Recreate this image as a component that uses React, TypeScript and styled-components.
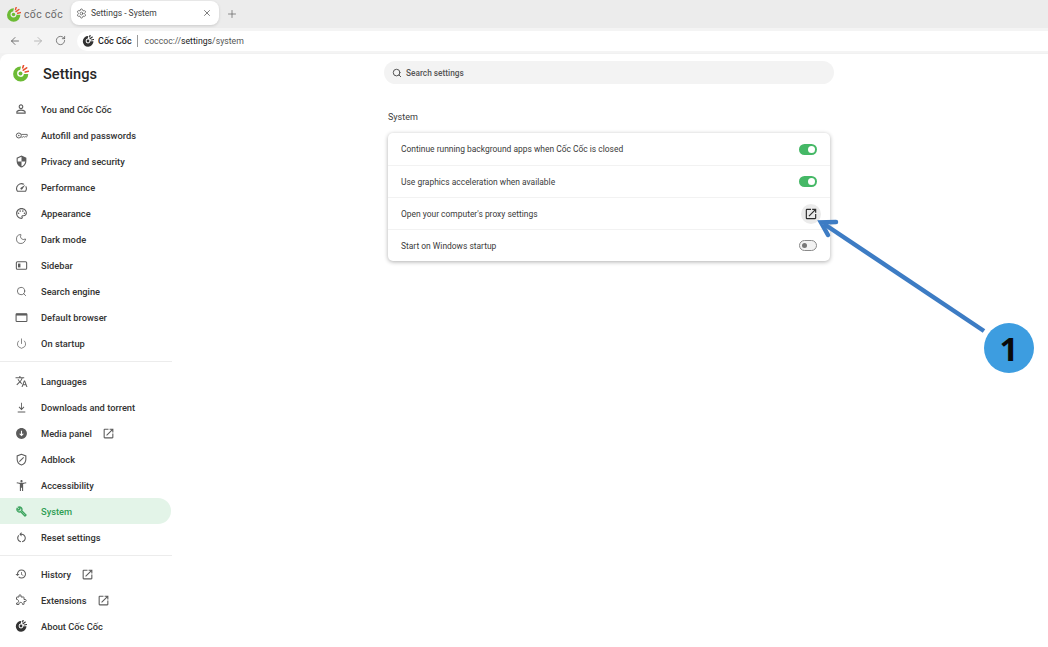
import React from "react";
import styled, { createGlobalStyle } from "styled-components";
import {
  ArrowLeft,
  ArrowRight,
  Moon,
  Plus,
  Power,
  RotateCw,
  Search,
  Settings,
  X,
} from "lucide-react";

const GlobalStyle = createGlobalStyle`
  html, body {
    margin: 0;
    padding: 0;
    background: #fff;
  }
  body {
    font-family: Roboto, "Noto Sans", sans-serif;
    color: #2b2b2b;
    overflow: hidden;
  }
`;

const Page = styled.div`
  position: relative;
  width: 1048px;
  height: 647px;
  display: flex;
  flex-direction: column;
  background: #f1f1f1;
  overflow: hidden;
`;

const TabStrip = styled.div`
  height: 28px;
  background: #ececec;
  display: flex;
  align-items: flex-end;
  padding-left: 6px;
`;

const Brand = styled.div`
  display: flex;
  align-items: center;
  gap: 3px;
  height: 28px;
  width: 65px;
  color: #666;
  font-size: 10.4px;
  letter-spacing: 0.4px;
`;

const Tab = styled.div`
  width: 148px;
  height: 24px;
  margin-bottom: 3px;
  background: #fff;
  border-radius: 8px;
  display: flex;
  align-items: center;
  padding: 0 7px 0 5px;
  box-sizing: border-box;
  gap: 4px;
  font-size: 8.5px;
  color: #3c3c3c;
  box-shadow: 0 1px 3px rgba(0, 0, 0, 0.14);
`;

const TabTitle = styled.span`
  flex: 1;
`;

const NewTab = styled.div`
  margin: 0 0 8px 7px;
  display: flex;
  color: #666;
`;

const Toolbar = styled.div`
  height: 25px;
  background: #f4f4f4;
  display: flex;
  align-items: center;
  padding-left: 9px;
  gap: 11px;
`;

const Omnibox = styled.div`
  flex: 1;
  height: 20px;
  background: #fff;
  border-radius: 10px 0 0 10px;
  display: flex;
  align-items: center;
  padding-left: 5px;
  font-size: 8.7px;
  color: #555;
`;

const SiteChip = styled.span`
  display: flex;
  align-items: center;
  gap: 4px;
  color: #222;
  font-size: 9px;
  font-weight: 500;
  padding-right: 5px;
  margin-right: 7px;
  border-right: 1px solid #9a9a9a;
  height: 12px;
`;

const UrlPath = styled.span`
  color: #222;
`;

const Content = styled.div`
  flex: 1;
  display: flex;
  min-height: 0;
  margin-top: 1px;
  background: #fff;
  border-radius: 8px 0 0 0;
`;

const Sidebar = styled.nav`
  width: 172px;
  flex: none;
  display: flex;
  flex-direction: column;
`;

const SideHeader = styled.div`
  height: 42px;
  box-sizing: border-box;
  padding: 0 0 3px 12px;
  display: flex;
  align-items: center;
  gap: 14px;
  font-size: 14.6px;
  font-weight: 500;
  color: #262626;
`;

const NavItem = styled.div<{ $active?: boolean }>`
  height: 26px;
  flex: none;
  display: flex;
  align-items: center;
  padding-left: 14px;
  gap: 13px;
  margin-right: 1px;
  border-radius: 0 13px 13px 0;
  font-size: 9.3px;
  font-weight: 500;
  color: ${(p) => (p.$active ? "#2f9e54" : "#333")};
  background: ${(p) => (p.$active ? "#e3f4e8" : "transparent")};
  svg {
    flex: none;
    color: ${(p) => (p.$active ? "#2f9e54" : "#5c5c5c")};
  }
`;

const IconSlot = styled.span`
  width: 14px;
  flex: none;
  display: flex;
  align-items: center;
  justify-content: center;
`;

const NavLabel = styled.span`
  display: flex;
  align-items: center;
  gap: 10px;
`;

const Divider = styled.div`
  height: 1px;
  flex: none;
  background: #ececec;
  margin: 5px 0;
`;

const WideDivider = styled(Divider)`
  margin-bottom: 6px;
`;

const Main = styled.main`
  flex: 1;
  display: flex;
  flex-direction: column;
  align-items: center;
  padding-top: 7px;
`;

const SearchBar = styled.div`
  width: 450px;
  height: 23px;
  margin-left: -2px;
  background: #f3f3f3;
  border-radius: 12px;
  display: flex;
  align-items: center;
  gap: 4px;
  padding-left: 8px;
  box-sizing: border-box;
  font-size: 8.3px;
  font-weight: 500;
  color: #555;
`;

const Section = styled.section`
  width: 442px;
  margin-left: -2px;
  margin-top: 26px;
`;

const SectionTitle = styled.h2`
  margin: 0 0 9px;
  font-size: 9px;
  font-weight: 400;
  line-height: 14px;
  color: #3c3c3c;
`;

const Card = styled.div`
  background: #fff;
  border-radius: 5px;
  box-shadow: 0 1px 4px rgba(0, 0, 0, 0.32);
`;

const Row = styled.div`
  height: 32px;
  box-sizing: border-box;
  display: flex;
  align-items: center;
  justify-content: space-between;
  padding: 0 13px;
  font-size: 8.45px;
  color: #3a3a3a;
  & + & {
    border-top: 1px solid #f2f2f2;
  }
`;

const Toggle = styled.span<{ $on?: boolean }>`
  width: 18px;
  height: 11px;
  box-sizing: border-box;
  border-radius: 6px;
  display: flex;
  align-items: center;
  padding: 0 2px;
  justify-content: ${(p) => (p.$on ? "flex-end" : "flex-start")};
  background: ${(p) => (p.$on ? "#45b866" : "#f2f2f2")};
  border: ${(p) => (p.$on ? "none" : "1px solid #8a8a8a")};
  &::after {
    content: "";
    width: ${(p) => (p.$on ? "7px" : "5px")};
    height: ${(p) => (p.$on ? "7px" : "5px")};
    border-radius: 50%;
    background: ${(p) => (p.$on ? "#fff" : "#777")};
  }
`;

const LinkButton = styled.span`
  width: 20px;
  height: 20px;
  margin-right: -4px;
  border-radius: 50%;
  background: #ebebeb;
  display: flex;
  align-items: center;
  justify-content: center;
  color: #2d2d2d;
`;

const Callout = styled.svg`
  position: absolute;
  left: 0;
  top: 0;
  pointer-events: none;
`;

const Badge = styled.div`
  position: absolute;
  left: 984px;
  top: 323px;
  width: 50px;
  height: 50px;
  border-radius: 50%;
  background: #3d9de0;
  color: #0a0a0a;
  display: flex;
  align-items: center;
  justify-content: center;
  font-family: "Open Sans", sans-serif;
  font-size: 33px;
  font-weight: 700;
`;

const CocCocMark = ({ size, dark }: { size: number; dark?: boolean }) => (
  <svg width={size} height={size} viewBox="1 2 18 18">
    <path
      d="M10.5 3.6A8 8 0 1 0 18.2 11.4h-4.6A3.6 3.6 0 1 1 9.6 7.4z"
      fill={dark ? "#333" : "#6cbb35"}
    />
    <circle cx="10" cy="11" r="2.1" fill={dark ? "#333" : "#6cbb35"} />
    <path
      d="M13 7.5l3.5-2.5M12.4 5l.8-2.6M15 9.5l3.4-.8"
      stroke={dark ? "#333" : "#e8502f"}
      strokeWidth="1.7"
      strokeLinecap="round"
    />
  </svg>
);

// material style glyphs, lucide ones are too thin for this sidebar
const Glyph = ({ size = 13, children }: { size?: number; children: React.ReactNode }) => (
  <svg width={size} height={size} viewBox="0 0 24 24" fill="currentColor">
    {children}
  </svg>
);

const OpenOut = ({ size = 13 }: { size?: number }) => (
  <Glyph size={size}>
    <path d="M19 19H5V5h7V3H5a2 2 0 0 0-2 2v14a2 2 0 0 0 2 2h14c1.1 0 2-.9 2-2v-7h-2v7zM14 3v2h3.59l-9.83 9.83 1.41 1.41L19 6.41V10h2V3h-7z" />
  </Glyph>
);

type NavEntry = {
  label: string;
  icon: React.ReactNode;
  external?: boolean;
  active?: boolean;
};

const navTop: NavEntry[] = [
  {
    label: "You and Cốc Cốc",
    icon: (
      <Glyph size={14}>
        <path d="M12 5.9c1.16 0 2.1.94 2.1 2.1s-.94 2.1-2.1 2.1S9.9 9.16 9.9 8s.94-2.1 2.1-2.1m0 9c2.97 0 6.1 1.46 6.1 2.1v1.1H5.9V17c0-.64 3.13-2.1 6.1-2.1M12 4C9.79 4 8 5.79 8 8s1.79 4 4 4 4-1.79 4-4-1.79-4-4-4zm0 9c-2.67 0-8 1.34-8 4v3h16v-3c0-2.66-5.33-4-8-4z" />
      </Glyph>
    ),
  },
  {
    label: "Autofill and passwords",
    icon: (
      <Glyph>
        <circle cx="7" cy="12" r="4.6" fill="none" stroke="currentColor" strokeWidth="1.8" />
        <circle cx="7" cy="12" r="1.4" />
        <path
          d="M11.6 10H22.5v3.4l-2 1.6-1.5-1.2-1.5 1.2-1.5-1.2-1.5 1.2h-2.8"
          fill="none"
          stroke="currentColor"
          strokeWidth="1.6"
        />
      </Glyph>
    ),
  },
  {
    label: "Privacy and security",
    icon: (
      <Glyph>
        <path d="M12 1L3 5v6c0 5.55 3.84 10.74 9 12 5.16-1.26 9-6.45 9-12V5l-9-4zm0 10.99h7c-.53 4.12-3.28 7.79-7 8.94V12H5V6.3l7-3.11v8.8z" />
      </Glyph>
    ),
  },
  {
    label: "Performance",
    icon: (
      <Glyph>
        <path d="M20.38 8.57l-1.23 1.85a8 8 0 0 1-.22 7.58H5.07A8 8 0 0 1 15.58 6.85l1.85-1.23A10 10 0 0 0 3.35 19a2 2 0 0 0 1.72 1h13.85a2 2 0 0 0 1.74-1 10 10 0 0 0-.27-10.44zm-9.79 6.84a2 2 0 0 0 2.83 0l5.66-8.49-8.49 5.66a2 2 0 0 0 0 2.83z" />
      </Glyph>
    ),
  },
  {
    label: "Appearance",
    icon: (
      <Glyph>
        <path d="M12 22C6.49 22 2 17.51 2 12S6.49 2 12 2s10 4.04 10 9c0 3.31-2.69 6-6 6h-1.77c-.28 0-.5.22-.5.5 0 .12.05.23.13.33.41.47.64 1.06.64 1.67 0 1.38-1.12 2.5-2.5 2.5zm0-18c-4.41 0-8 3.59-8 8s3.59 8 8 8c.28 0 .5-.22.5-.5 0-.16-.08-.28-.14-.35-.41-.46-.63-1.05-.63-1.65 0-1.38 1.12-2.5 2.5-2.5H16c2.21 0 4-1.79 4-4 0-3.86-3.59-7-8-7z" />
        <circle cx="6.5" cy="11.5" r="1.5" />
        <circle cx="9.5" cy="7.5" r="1.5" />
        <circle cx="14.5" cy="7.5" r="1.5" />
        <circle cx="17.5" cy="11.5" r="1.5" />
      </Glyph>
    ),
  },
  { label: "Dark mode", icon: <Moon size={12} strokeWidth={1.6} /> },
  {
    label: "Sidebar",
    icon: (
      <Glyph>
        <rect x="2.5" y="5" width="19" height="14" rx="2" fill="none" stroke="currentColor" strokeWidth="2" />
        <rect x="5.5" y="8.5" width="4.5" height="7" />
      </Glyph>
    ),
  },
  {
    label: "Search engine",
    icon: <Search size={11} strokeWidth={1.8} />,
  },
  {
    label: "Default browser",
    icon: (
      <Glyph>
        <rect x="2" y="5" width="20" height="14.5" rx="1.5" fill="none" stroke="currentColor" strokeWidth="2" />
        <rect x="2" y="5" width="20" height="3.4" />
      </Glyph>
    ),
  },
  { label: "On startup", icon: <Power size={11} strokeWidth={1.6} /> },
];

const navMiddle: NavEntry[] = [
  {
    label: "Languages",
    icon: (
      <Glyph>
        <path d="M12.87 15.07l-2.54-2.51.03-.03c1.74-1.94 2.98-4.17 3.71-6.53H17V4h-7V2H8v2H1v1.99h11.17C11.5 7.92 10.44 9.75 9 11.35 8.07 10.32 7.3 9.19 6.69 8h-2c.73 1.63 1.73 3.17 2.98 4.56l-5.09 5.02L4 19l5-5 3.11 3.11.76-2.04zM18.5 10h-2L12 22h2l1.12-3h4.75L21 22h2l-4.5-12zm-2.62 7l1.62-4.33L19.12 17h-3.24z" />
      </Glyph>
    ),
  },
  {
    label: "Downloads and torrent",
    icon: (
      <Glyph>
        <path d="M11.2 3h1.6v10.6l3.3-3.3 1.1 1.1L12 17l-5.2-5.6 1.1-1.1 3.3 3.3zM5 19.4h14V21H5z" />
      </Glyph>
    ),
  },
  {
    label: "Media panel",
    icon: (
      <Glyph>
        <path d="M12 2C6.48 2 2 6.48 2 12s4.48 10 10 10 10-4.48 10-10S17.52 2 12 2zm0 15l-4.5-4.5H11V7h2v5.5h3.5z" />
      </Glyph>
    ),
    external: true,
  },
  {
    label: "Adblock",
    icon: (
      <Glyph>
        <path
          d="M12 2.5L4 5.5v6c0 4.8 3.3 9 8 10.5 4.7-1.5 8-5.7 8-10.5v-6zM8 16l8-8"
          fill="none"
          stroke="currentColor"
          strokeWidth="2"
        />
      </Glyph>
    ),
  },
  {
    label: "Accessibility",
    icon: (
      <Glyph>
        <path d="M20.5 6c-2.61.7-5.67 1-8.5 1s-5.89-.3-8.5-1L3 8c1.86.5 4 .83 6 1v13h2v-6h2v6h2V9c2-.17 4.14-.5 6-1l-.5-2zM12 6c1.1 0 2-.9 2-2s-.9-2-2-2-2 .9-2 2 .9 2 2 2z" />
      </Glyph>
    ),
  },
  {
    label: "System",
    icon: (
      <Glyph size={11}>
        <path
          d="M22.61 18.99l-9.08-9.08c.93-2.34.45-5.1-1.44-7C9.79.61 6.21.4 3.66 2.25L7.5 6.1 6.08 7.51 2.25 3.69C.4 6.23.61 9.82 2.91 12.11c1.86 1.86 4.57 2.35 6.89 1.48l9.11 9.11c.39.39 1.02.39 1.41 0l2.3-2.3c.4-.38.4-1.01-.01-1.41zm-3 1.6l-9.46-9.46c-.61.45-1.29.72-2 .82-1.36.2-2.79-.21-3.83-1.25C3.37 9.76 2.93 8.5 3 7.26l3.09 3.09 4.24-4.24-3.09-3.09c1.24-.07 2.49.37 3.44 1.31 1.08 1.08 1.49 2.57 1.24 3.96-.12.71-.42 1.37-.88 1.96l9.45 9.45-.88.88z"
          stroke="currentColor"
          strokeWidth="0.8"
        />
      </Glyph>
    ),
    active: true,
  },
  {
    label: "Reset settings",
    icon: (
      <Glyph>
        <path d="M12 5V2L8 6l4 4V7c3.31 0 6 2.69 6 6 0 2.97-2.17 5.43-5 5.91v2.02c3.95-.49 7-3.85 7-7.93 0-4.42-3.58-8-8-8zm-6 8c0-1.65.67-3.15 1.76-4.24L6.34 7.34C4.9 8.79 4 10.79 4 13c0 4.08 3.05 7.44 7 7.93v-2.02c-2.83-.48-5-2.94-5-5.91z" />
      </Glyph>
    ),
  },
];

const navBottom: NavEntry[] = [
  {
    label: "History",
    icon: (
      <Glyph size={12}>
        <path d="M13 3a9 9 0 0 0-9 9H1l3.89 3.89.07.14L9 12H6c0-3.87 3.13-7 7-7s7 3.13 7 7-3.13 7-7 7c-1.93 0-3.68-.79-4.94-2.06l-1.42 1.42A8.954 8.954 0 0 0 13 21a9 9 0 0 0 0-18zm-1 5v5l4.28 2.54.72-1.21-3.5-2.08V8H12z" />
      </Glyph>
    ),
    external: true,
  },
  {
    label: "Extensions",
    icon: (
      <Glyph size={12}>
        <path
          d="M20.5 11H18V7a1 1 0 0 0-1-1h-5V3.5a2 2 0 0 0-4 0V6H4a1 1 0 0 0-1 1v3.8h.5c2 0 3.7 1.6 3.7 3.7s-1.7 3.7-3.7 3.7H3V20a1 1 0 0 0 1 1h3.8v-.5c0-2 1.6-3.7 3.7-3.7s3.7 1.7 3.7 3.7v.5H17a1 1 0 0 0 1-1v-5h2.5a2 2 0 0 0 0-4z"
          fill="none"
          stroke="currentColor"
          strokeWidth="2"
        />
      </Glyph>
    ),
    external: true,
  },
  { label: "About Cốc Cốc", icon: <CocCocMark size={12} dark /> },
];

const NavGroup = ({ items }: { items: NavEntry[] }) => (
  <>
    {items.map((item) => (
      <NavItem key={item.label} $active={item.active}>
        <IconSlot>{item.icon}</IconSlot>
        <NavLabel>
          {item.label}
          {item.external && <OpenOut />}
        </NavLabel>
      </NavItem>
    ))}
  </>
);

export default function App() {
  return (
    <Page>
      <GlobalStyle />
      <TabStrip>
        <Brand>
          <CocCocMark size={15} />
          cốc cốc
        </Brand>
        <Tab>
          <Settings size={11} strokeWidth={1.4} />
          <TabTitle>Settings - System</TabTitle>
          <X size={10} strokeWidth={1.6} />
        </Tab>
        <NewTab>
          <Plus size={12} strokeWidth={1.5} />
        </NewTab>
      </TabStrip>
      <Toolbar>
        <ArrowLeft size={12} strokeWidth={1.6} color="#555" />
        <ArrowRight size={12} strokeWidth={1.6} color="#aaa" />
        <RotateCw size={11} strokeWidth={1.6} color="#555" />
        <Omnibox>
          <SiteChip>
            <CocCocMark size={12} dark />
            Cốc Cốc
          </SiteChip>
          coccoc://<UrlPath>settings</UrlPath>/system
        </Omnibox>
      </Toolbar>
      <Content>
        <Sidebar>
          <SideHeader>
            <CocCocMark size={17} />
            Settings
          </SideHeader>
          <NavGroup items={navTop} />
          <WideDivider />
          <NavGroup items={navMiddle} />
          <Divider />
          <NavGroup items={navBottom} />
        </Sidebar>
        <Main>
          <SearchBar>
            <Search size={10} strokeWidth={2.4} />
            Search settings
          </SearchBar>
          <Section>
            <SectionTitle>System</SectionTitle>
            <Card>
              <Row>
                Continue running background apps when Cốc Cốc is closed
                <Toggle $on />
              </Row>
              <Row>
                Use graphics acceleration when available
                <Toggle $on />
              </Row>
              <Row>
                Open your computer's proxy settings
                <LinkButton>
                  <OpenOut size={14} />
                </LinkButton>
              </Row>
              <Row>
                Start on Windows startup
                <Toggle />
              </Row>
            </Card>
          </Section>
        </Main>
      </Content>
      <Callout width="1048" height="647" viewBox="0 0 1048 647">
        <path d="M984 331L824 224" stroke="#3d7cc4" strokeWidth="4.5" fill="none" />
        <path
          d="M836 222L821 222.5L828 235"
          stroke="#3d7cc4"
          strokeWidth="4.5"
          fill="none"
          strokeLinecap="round"
        />
      </Callout>
      <Badge>1</Badge>
    </Page>
  );
}
